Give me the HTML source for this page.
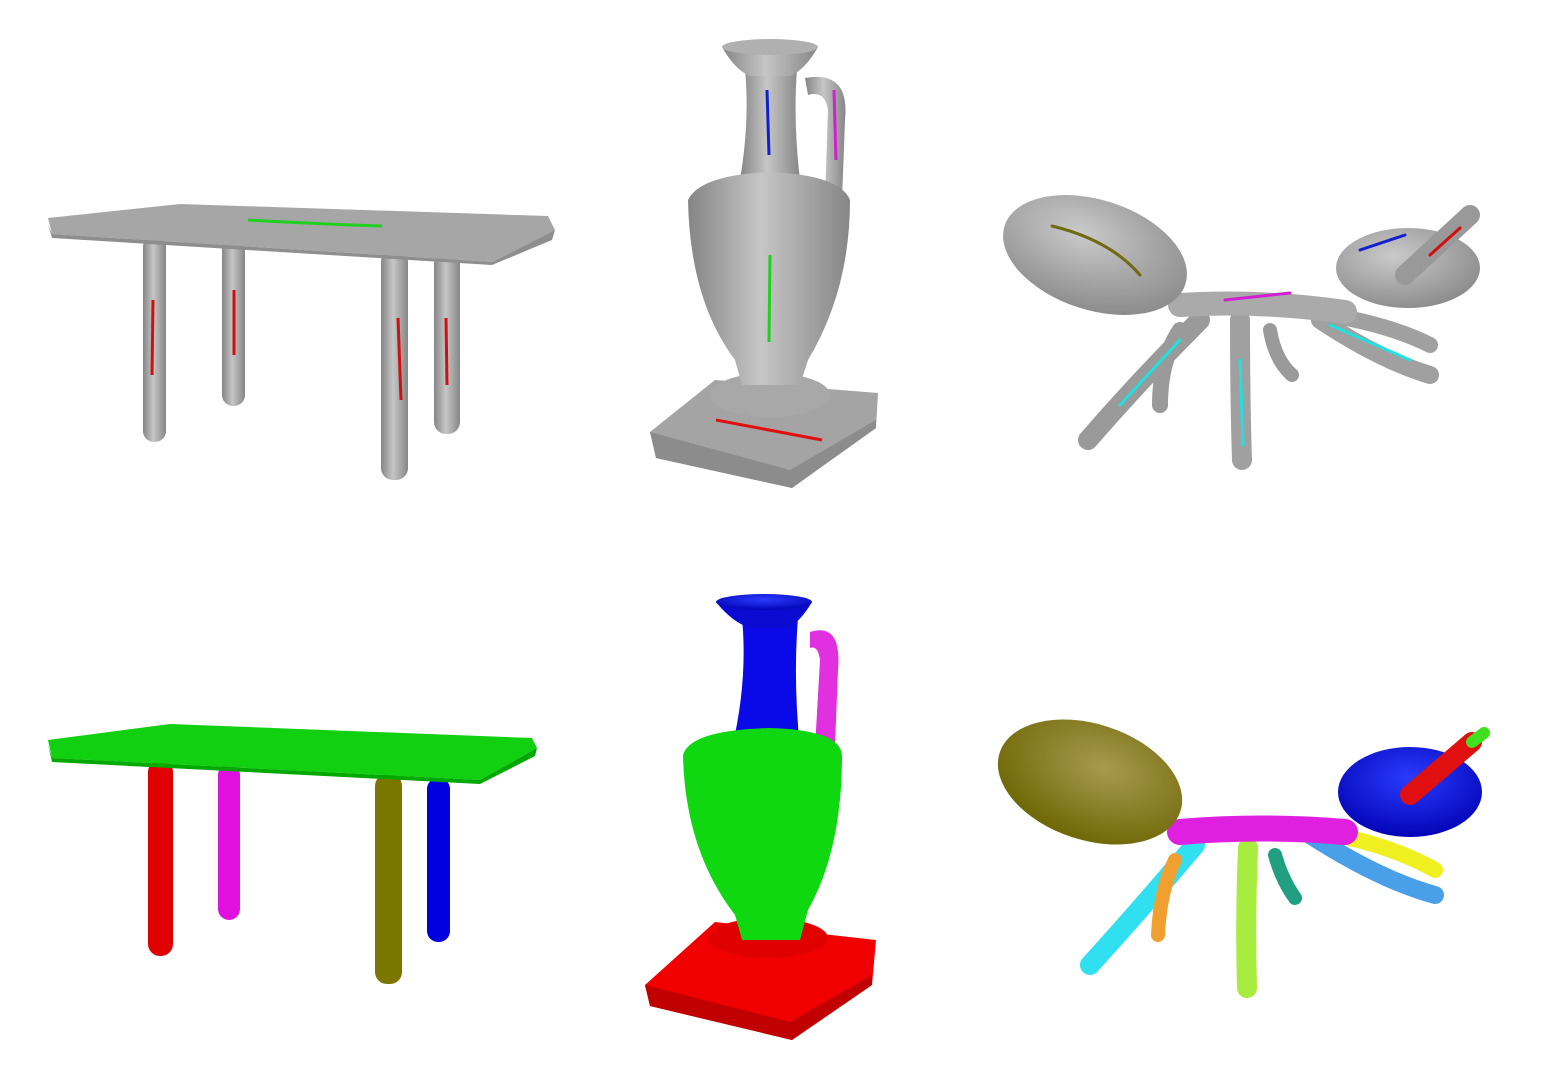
<!DOCTYPE html>
<html><head><meta charset="utf-8"><style>html,body{margin:0;padding:0;background:#fff}svg{display:block}</style></head>
<body>
<svg width="1547" height="1086" viewBox="0 0 1547 1086" xmlns="http://www.w3.org/2000/svg">
<defs>
<linearGradient id="g" x1="0" x2="1"><stop offset="0" stop-color="#858585"/><stop offset=".45" stop-color="#c6c6c6"/><stop offset="1" stop-color="#868686"/></linearGradient>
<radialGradient id="rg" cx=".4" cy=".35" r=".7"><stop offset="0" stop-color="#cacaca"/><stop offset="1" stop-color="#8a8a8a"/></radialGradient>
<radialGradient id="ol" cx=".55" cy=".35" r=".7"><stop offset="0" stop-color="#a89a50"/><stop offset="1" stop-color="#6a6400"/></radialGradient>
<radialGradient id="bl" cx=".5" cy=".35" r=".7"><stop offset="0" stop-color="#2a3cff"/><stop offset="1" stop-color="#0000b0"/></radialGradient>
</defs>
<rect width="1547" height="1086" fill="#fff"/>

<!-- TOP TABLE -->
<g>
<rect x="143" y="236" width="23" height="206" rx="11" fill="url(#g)"/>
<rect x="222" y="236" width="23" height="170" rx="11" fill="url(#g)"/>
<rect x="381" y="250" width="27" height="230" rx="12" fill="url(#g)"/>
<rect x="434" y="252" width="26" height="182" rx="12" fill="url(#g)"/>
<path d="M48 218 L180 204 L548 216 L555 230 L492 262 L52 234 Z" fill="#a6a6a6"/>
<path d="M48 224 L52 234 L492 262 L555 230 L552 240 L492 265 L52 238 Z" fill="#8e8e8e"/>
<path d="M248 220 Q320 224 382 226" stroke="#20d020" stroke-width="3" fill="none"/>
<path d="M153 300 L152 375" stroke="#d01010" stroke-width="3"/>
<path d="M234 290 L234 355" stroke="#d01010" stroke-width="3"/>
<path d="M398 318 L401 400" stroke="#d01010" stroke-width="3"/>
<path d="M446 318 L447 385" stroke="#d01010" stroke-width="3"/>
</g>

<!-- TOP VASE -->
<g>
<path d="M650 432 L715 380 L878 393 L876 428 L792 488 L656 458 Z" fill="#a4a4a4"/>
<path d="M650 432 L656 458 L792 488 L876 428 L876 420 L790 470 Z" fill="#8c8c8c"/>
<ellipse cx="770" cy="395" rx="60" ry="22" fill="#a8a8a8"/>
<path d="M805 78 Q850 70 845 120 L842 200 L825 200 L828 110 Q825 90 808 95 Z" fill="url(#g)"/>
<path d="M745 70 Q750 120 740 180 L800 180 Q793 120 797 70 Z" fill="url(#g)"/>
<path d="M688 200 Q700 175 770 172 Q840 175 850 200 Q850 290 808 360 L800 385 L742 385 L735 360 Q690 300 688 200 Z" fill="url(#g)"/>
<path d="M722 47 L818 47 Q805 70 790 76 L750 76 Q735 70 722 47 Z" fill="url(#g)"/>
<ellipse cx="770" cy="47" rx="48" ry="8" fill="#b0b0b0"/>
<path d="M767 90 L769 155" stroke="#1020d0" stroke-width="3"/>
<path d="M834 90 L836 160" stroke="#d020d0" stroke-width="3"/>
<path d="M770 255 L769 342" stroke="#20d020" stroke-width="3"/>
<path d="M716 420 L822 440" stroke="#e01010" stroke-width="3"/>
</g>

<!-- TOP ANT -->
<g fill="none" stroke-linecap="round">
<path d="M1200 320 Q1140 380 1088 440" stroke="#9a9a9a" stroke-width="20"/>
<path d="M1180 330 Q1160 360 1160 405" stroke="#9a9a9a" stroke-width="16"/>
<path d="M1240 320 Q1240 400 1242 460" stroke="#a0a0a0" stroke-width="20"/>
<path d="M1270 330 Q1275 360 1292 375" stroke="#9a9a9a" stroke-width="14"/>
<path d="M1320 320 Q1380 360 1430 375" stroke="#a0a0a0" stroke-width="18"/>
<path d="M1330 315 Q1390 325 1430 345" stroke="#a0a0a0" stroke-width="16"/>
<path d="M1180 305 Q1260 300 1345 312" stroke="#aaaaaa" stroke-width="24"/>
<ellipse cx="1095" cy="255" rx="95" ry="55" fill="url(#rg)" transform="rotate(18 1095 255)"/>
<ellipse cx="1408" cy="268" rx="72" ry="40" fill="url(#rg)"/>
<path d="M1405 275 L1470 215" stroke="#999" stroke-width="20"/>
<path d="M1052 226 Q1110 240 1140 275" stroke="#706a10" stroke-width="3"/>
<path d="M1360 250 L1405 235" stroke="#1020d0" stroke-width="3"/>
<path d="M1430 255 L1460 228" stroke="#d01010" stroke-width="3"/>
<path d="M1225 300 L1290 293" stroke="#d020d0" stroke-width="3"/>
<path d="M1120 405 L1180 340" stroke="#20e0e0" stroke-width="3"/>
<path d="M1240 360 L1243 445" stroke="#20e0e0" stroke-width="3"/>
<path d="M1330 325 L1410 360" stroke="#20e0e0" stroke-width="3"/>
</g>

<!-- BOTTOM TABLE -->
<g>
<rect x="148" y="760" width="25" height="196" rx="12" fill="#e00000"/>
<rect x="218" y="764" width="22" height="156" rx="11" fill="#e010e0"/>
<rect x="375" y="774" width="27" height="210" rx="12" fill="#7a7600"/>
<rect x="427" y="778" width="23" height="164" rx="11" fill="#0000e0"/>
<path d="M48 740 L170 724 L532 738 L537 748 L480 780 L52 758 Z" fill="#10d010"/>
<path d="M48 744 L52 758 L480 780 L537 748 L535 756 L480 784 L52 762 Z" fill="#00a800"/>
</g>

<!-- BOTTOM VASE -->
<g>
<path d="M645 985 L715 922 L876 940 L872 985 L792 1040 L650 1006 Z" fill="#f00000"/>
<path d="M645 985 L650 1006 L792 1040 L872 985 L872 975 L790 1022 Z" fill="#c00000"/>
<ellipse cx="768" cy="938" rx="60" ry="20" fill="#e00000"/>
<path d="M810 632 Q842 622 838 670 L835 745 L815 748 L820 660 Q818 645 810 648 Z" fill="#e030e0"/>
<path d="M742 618 Q748 680 732 748 L800 748 Q793 680 798 618 Z" fill="#0a0ae8"/>
<path d="M683 755 Q690 730 770 728 Q840 730 842 755 Q842 850 808 910 L800 940 L742 940 L735 915 Q685 850 683 755 Z" fill="#10d810"/>
<path d="M716 602 L812 602 Q800 622 788 628 L750 628 Q732 622 716 602 Z" fill="#0a0ad0"/>
<ellipse cx="764" cy="602" rx="48" ry="8" fill="url(#bl)"/>
</g>

<!-- BOTTOM ANT -->
<g fill="none" stroke-linecap="round">
<path d="M1195 845 Q1140 910 1090 965" stroke="#30e0f0" stroke-width="20"/>
<path d="M1175 860 Q1160 890 1158 935" stroke="#f0a030" stroke-width="14"/>
<path d="M1248 848 Q1245 920 1247 988" stroke="#a8ec40" stroke-width="20"/>
<path d="M1275 855 Q1282 880 1295 898" stroke="#20a080" stroke-width="14"/>
<path d="M1310 835 Q1380 880 1435 895" stroke="#4aa0e8" stroke-width="18"/>
<path d="M1350 838 Q1400 850 1435 870" stroke="#f0f020" stroke-width="16"/>
<path d="M1180 832 Q1260 825 1345 832" stroke="#e020e0" stroke-width="26"/>
<ellipse cx="1090" cy="782" rx="95" ry="58" fill="url(#ol)" transform="rotate(18 1090 782)"/>
<ellipse cx="1410" cy="792" rx="72" ry="45" fill="url(#bl)"/>
<path d="M1410 795 L1472 742" stroke="#e01010" stroke-width="20"/>
<path d="M1472 742 L1484 733" stroke="#40e020" stroke-width="12"/>
</g>
</svg>
</body></html>
